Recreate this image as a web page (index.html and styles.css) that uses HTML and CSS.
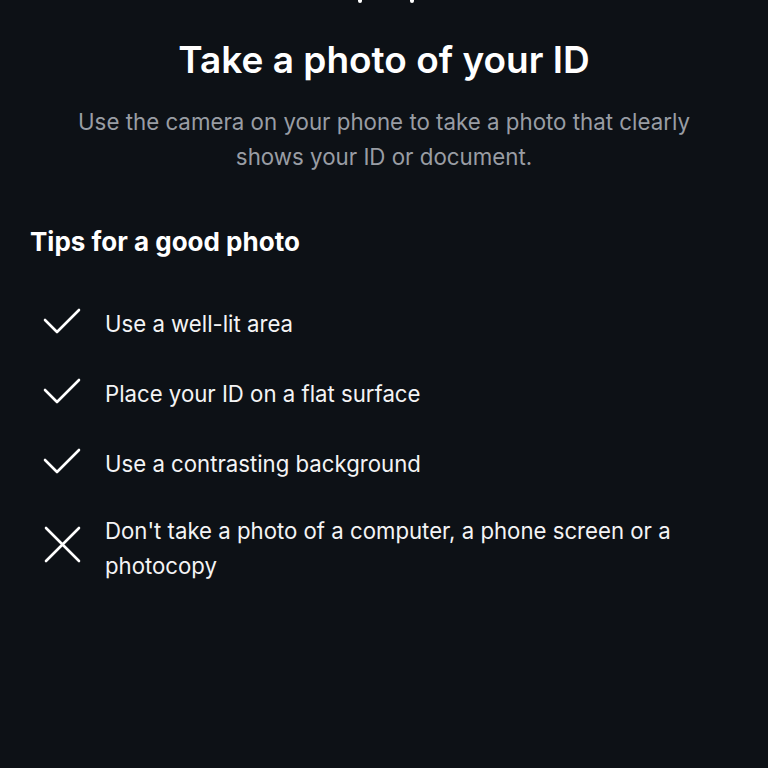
FILE: index.html
```html
<!DOCTYPE html>
<html lang="en">
<head>
    <meta charset="UTF-8">
    <meta name="viewport" content="width=device-width, initial-scale=1.0">
    <title>Take a photo of your ID</title>
    <link rel="stylesheet" href="styles.css">
</head>
<body>
    <div class="screen">
        <div class="top-icon">
            <svg width="80" height="8" viewBox="0 0 80 8">
                <path d="M15 -6 L15 1" stroke="#fff" stroke-width="4" stroke-linecap="round"/>
                <path d="M67 -6 L67 1" stroke="#fff" stroke-width="4" stroke-linecap="round"/>
            </svg>
        </div>
        <h1 class="title">Take a photo of your ID</h1>
        <p class="subtitle">Use the camera on your phone to take a photo that clearly shows your ID or document.</p>

        <h2 class="tips-heading">Tips for a good photo</h2>
        <ul class="tips">
            <li class="tip">
                <svg class="tip-icon" viewBox="0 0 40 40"><path d="M3 17 L15 29 L37 7" /></svg>
                <span>Use a well-lit area</span>
            </li>
            <li class="tip">
                <svg class="tip-icon" viewBox="0 0 40 40"><path d="M3 17 L15 29 L37 7" /></svg>
                <span>Place your ID on a flat surface</span>
            </li>
            <li class="tip">
                <svg class="tip-icon" viewBox="0 0 40 40"><path d="M3 17 L15 29 L37 7" /></svg>
                <span>Use a contrasting background</span>
            </li>
            <li class="tip tip-wrap">
                <svg class="tip-icon" viewBox="0 0 40 40"><path d="M4 3 L37 36 M37 3 L4 36" /></svg>
                <span>Don't take a photo of a computer, a phone screen or a photocopy</span>
            </li>
        </ul>
    </div>
</body>
</html>
```

FILE: styles.css
```css
body {
    margin: 0;
    padding: 0;
    background: #0d1116;
    color: #f4f4f5;
    font-family: 'Inter', 'Roboto', sans-serif;
}
.screen {
    width: 768px;
    height: 768px;
    padding: 0 30px;
    box-sizing: border-box;
}
.top-icon {
    display: flex;
    justify-content: center;
    height: 8px;
    padding-left: 2px;
}
.title {
    margin: 30px 0 0;
    font-size: 37px;
    line-height: 44px;
    font-weight: 600;
    text-align: center;
    color: #ffffff;
}
.subtitle {
    margin: 22px auto 0;
    max-width: 660px;
    font-size: 22.3px;
    line-height: 35px;
    font-weight: 400;
    text-align: center;
    color: #999da4;
}
.tips-heading {
    margin: 52px 0 0;
    font-size: 26px;
    line-height: 32px;
    font-weight: 700;
    color: #ffffff;
}
.tips {
    list-style: none;
    margin: 30px 0 0;
    padding: 0;
}
.tip {
    display: flex;
    align-items: center;
    gap: 23px;
    height: 70px;
    padding-left: 12px;
    font-size: 22.2px;
    line-height: 35px;
}
.tip-wrap {
    height: auto;
    align-items: flex-start;
    padding-top: 15px;
}
.tip-wrap .tip-icon {
    margin-top: 12px;
}
.tip-icon {
    flex: none;
    width: 40px;
    height: 40px;
    fill: none;
    stroke: #ffffff;
    stroke-width: 2.6;
    stroke-linecap: round;
    stroke-linejoin: round;
}
```
